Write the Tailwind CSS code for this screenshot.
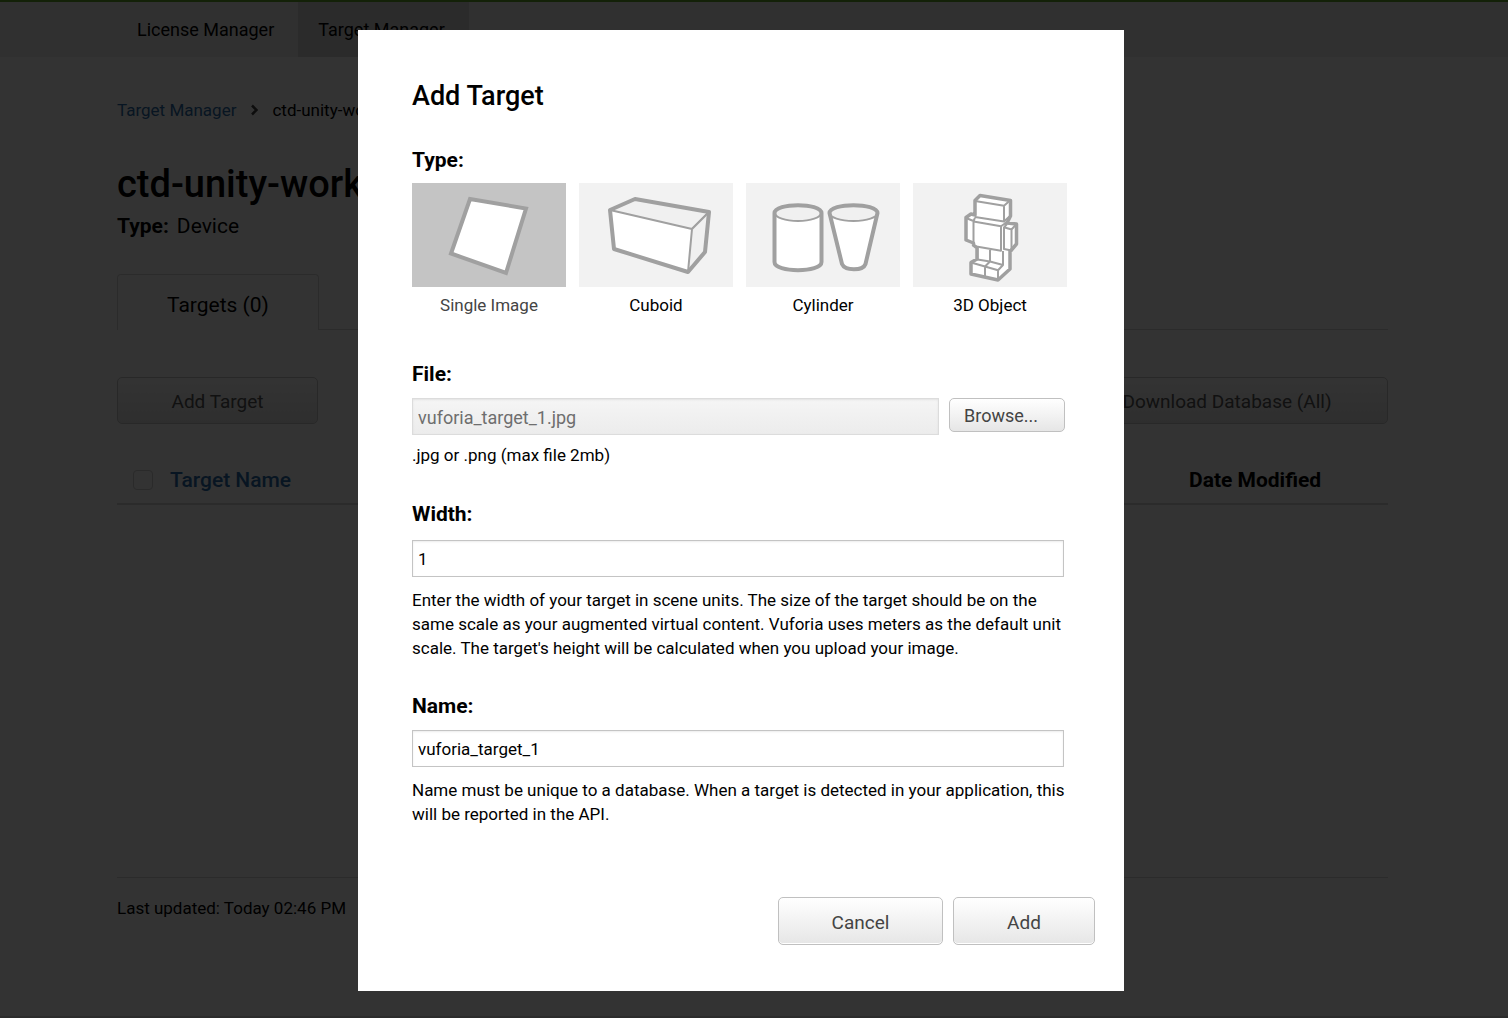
<!DOCTYPE html>
<html lang="en">
<head>
<meta charset="utf-8">
<meta name="viewport" content="width=device-width, initial-scale=1">
<title>Target Manager</title>
<script src="https://cdn.jsdelivr.net/npm/@tailwindcss/browser@4"></script>
</head>
<body class="relative min-h-screen overflow-x-hidden bg-white font-['Roboto',sans-serif] text-[17px] leading-6 text-black">

<!-- Page behind the dialog -->
<div class="flex min-h-screen flex-col border-t-2 border-[#5fa32a]">
  <nav class="h-[55px] bg-[#f0f0f0]">
    <div class="mx-auto flex h-full max-w-[1508px] pl-[117px] text-[18px]">
      <a href="#" class="flex items-center pt-px pr-6 pl-5">License Manager</a>
      <a href="#" class="flex items-center bg-[#d7d7d7] pt-px pr-6 pl-5">Target Manager</a>
    </div>
  </nav>

  <main class="mx-auto w-full max-w-[1508px] pr-[120px] pl-[117px]">
    <div class="mt-[41px] flex items-center gap-3.5">
      <a href="#" class="text-[#2a6ca8]">Target Manager</a>
      <svg class="h-3 w-2" viewBox="0 0 8 12" fill="none" stroke="#444" stroke-width="2.500"><path d="M2 1.500 6.500 6 2 10.500"/></svg>
      <span>ctd-unity-work</span>
    </div>
    <h1 class="mt-10 text-[38px] leading-[44px] font-medium">ctd-unity-work</h1>
    <p class="mt-2 flex gap-2 text-[21px]"><strong class="font-bold">Type:</strong> Device</p>

    <div class="mt-9 flex">
      <a href="#" class="flex h-14 w-[202px] items-center justify-center rounded-t border border-b-0 border-[#d7d7d7] pt-1 text-[21px]">Targets (0)</a>
      <div class="grow border-b border-[#d7d7d7]"></div>
    </div>

    <div class="mt-[47px] flex justify-between text-[19px] text-[#555]">
      <button type="button" class="h-[47px] w-[201px] rounded-[5px] border border-[#c8c8c8] bg-linear-to-b from-white to-[#e6e6e6] pt-0.5">Add Target</button>
      <button type="button" class="h-[47px] w-[322px] rounded-[5px] border border-[#c8c8c8] bg-linear-to-b from-white to-[#e6e6e6] pt-0.5">Download Database (All)</button>
    </div>

    <table class="mt-8 w-full text-left text-[21px]">
      <thead>
        <tr class="h-12 border-b-2 border-[#d7d7d7]">
          <th class="w-[53px] pl-4"><input type="checkbox" aria-label="Select all targets" class="block h-5 w-5 appearance-none rounded border border-[#d0d0d0]"></th>
          <th class="font-medium"><a href="#" class="text-[#2a6ca8]">Target Name</a></th>
          <th class="w-[199px] font-bold">Date Modified</th>
        </tr>
      </thead>
    </table>

    <div class="mt-[372px] border-t border-[#d7d7d7] pt-[18px]">Last updated: Today 02:46 PM</div>
  </main>
  <footer class="mt-auto h-0.5 bg-[#dcdcdc]"></footer>
</div>

<!-- Dialog -->
<div class="absolute inset-0 flex items-start justify-center bg-black/80 pt-[30px] pr-[26px]">
  <form role="dialog" aria-labelledby="dialog-title" class="w-full max-w-[766px] bg-white pt-[50px] pr-[29px] pb-[46px] pl-[54px]">
    <h2 id="dialog-title" class="text-[27px] leading-8 font-medium">Add Target</h2>

    <fieldset class="mt-9">
      <legend class="text-[21px] font-bold">Type:</legend>
      <div class="mt-[11px] mr-7 grid grid-cols-4 gap-[13px] text-center">
        <label class="text-[#444]">
          <input type="radio" name="type" class="sr-only" checked>
          <span class="block h-[104px] bg-[#c4c4c4]">
            <svg class="mx-auto block h-[104px] w-[154px]" viewBox="0 0 154 104"><path d="M58 16 114 25.500 94 90 39 70.500Z" fill="#fff" stroke="#a0a0a0" stroke-width="4"/></svg>
          </span>
          <span class="mt-1.5 block">Single Image</span>
        </label>
        <label>
          <input type="radio" name="type" class="sr-only">
          <span class="block h-[104px] bg-[#f2f2f2]">
            <svg class="mx-auto block h-[104px] w-[154px]" viewBox="0 0 154 104" stroke="#a0a0a0" stroke-linejoin="round">
              <path d="M31 27 56 16 130 29 126 69 109 89 35 66Z" fill="#fff" stroke="none"/>
              <path d="M31 27 56 16 130 29 113 46Z" fill="#f0f0f0" stroke-width="2"/>
              <path d="M113 46 130 29 126 69 109 89Z" fill="#f0f0f0" stroke-width="2"/>
              <path d="M31 27 56 16 130 29 126 69 109 89 35 66Z" fill="none" stroke-width="4"/>
            </svg>
          </span>
          <span class="mt-1.5 block">Cuboid</span>
        </label>
        <label>
          <input type="radio" name="type" class="sr-only">
          <span class="block h-[104px] bg-[#f2f2f2]">
            <svg class="mx-auto block h-[104px] w-[154px]" viewBox="0 0 154 104" fill="none" stroke="#a0a0a0">
              <path d="M29 31V79C29 89 75 89 75 79V31" fill="#fff" stroke="none"/>
              <path d="M84 31 95 79C98 87 116 87 119 79L131 31" fill="#fff" stroke="none"/>
              <ellipse cx="52" cy="30" rx="23" ry="8" fill="#f0f0f0" stroke-width="2"/>
              <ellipse cx="107.500" cy="30" rx="24" ry="8" fill="#f0f0f0" stroke-width="2"/>
              <path d="M28.500 30C29 19.500 75 19.500 75.500 30V79C75.500 90 28.500 90 28.500 79Z" stroke-width="4"/>
              <path d="M83.500 30C84 19.500 131 19.500 131.500 30L119.500 81C117 88 99 88 96 81Z" stroke-width="4" stroke-linejoin="round"/>
            </svg>
          </span>
          <span class="mt-1.5 block">Cylinder</span>
        </label>
        <label>
          <input type="radio" name="type" class="sr-only">
          <span class="block h-[104px] bg-[#f2f2f2]">
            <svg class="mx-auto block h-[104px] w-[154px]" viewBox="0 0 154 104" fill="none" stroke="#a0a0a0" stroke-linejoin="round">
              <path d="M62 17.500 67 12.500 97.500 17.500V33L94 40 103.500 41V61L98 67.500 97 68V86L85 97 58 91V79.500L64 76V65L60.500 62V60L53 57V34.500L58 31 62 32Z" fill="#fff" stroke-width="3.500"/>
              <path d="M62 18 91 22.700 97 17.500M91 22.700V38.500M62 34 91 38.500 97 33M62 34.500 60.500 38.500 88 43.300 94 39M60.500 38.500V63L88 67.700V43.300M53 35 60.500 38M91 44.300V66L98.500 67.500V46.500L91 44.300 94 41M98.500 46.500 103.500 41M64.500 65V76.500L77 78.500V67M77 78.500 90 82V68M58 79.500 72 83.500 77 78.500M72 83.500V94M72 83.500 85 87.300 90 82M85 87.300V97" stroke-width="2"/>
            </svg>
          </span>
          <span class="mt-1.5 block">3D Object</span>
        </label>
      </div>
    </fieldset>

    <div class="mt-[45px]">
      <label for="file" class="block text-[21px] font-bold">File:</label>
      <div class="mt-3 flex items-start gap-2.5">
        <input id="file" type="text" readonly value="vuforia_target_1.jpg" class="h-[37px] w-[527px] border border-[#dcdcdc] bg-linear-to-b from-[#f5f5f5] to-[#ececec] px-[5px] pt-0.5 text-[18px] text-[#6e6e6e] shadow-[inset_0_1px_2px_rgba(0,0,0,0.08)]">
        <button type="button" class="h-[34px] w-[116px] rounded-[5px] border border-[#c0c0c0] bg-linear-to-b from-white to-[#e6e6e6] pt-0.5 pl-3.5 text-left text-[18px] text-[#444]">Browse...</button>
      </div>
      <p class="mt-2">.jpg or .png (max file 2mb)</p>
    </div>

    <div class="mt-[35px]">
      <label for="width" class="block text-[21px] font-bold">Width:</label>
      <input id="width" type="text" value="1" class="mt-3.5 block h-[37px] w-[652px] border border-[#c4c4c4] bg-white px-[5px] shadow-[inset_0_1px_2px_rgba(0,0,0,0.08)]">
      <p class="mt-[11px] max-w-[668px]">Enter the width of your target in scene units. The size of the target should be on the same scale as your augmented virtual content. Vuforia uses meters as the default unit scale. The target's height will be calculated when you upload your image.</p>
    </div>

    <div class="mt-[34px]">
      <label for="name" class="block text-[21px] font-bold">Name:</label>
      <input id="name" type="text" value="vuforia_target_1" class="mt-3 block h-[37px] w-[652px] border border-[#c4c4c4] bg-white px-[5px] shadow-[inset_0_1px_2px_rgba(0,0,0,0.08)]">
      <p class="mt-[11px] max-w-[668px]">Name must be unique to a database. When a target is detected in your application, this will be reported in the API.</p>
    </div>

    <div class="mt-[71px] flex justify-end gap-2.5 text-[19px] text-[#444]">
      <button type="button" class="h-12 w-[165px] rounded-[5px] border border-[#c0c0c0] bg-linear-to-b from-white to-[#e6e6e6] pt-1 shadow-[inset_0_-1px_0_#fff]">Cancel</button>
      <button type="submit" class="h-12 w-[142px] rounded-[5px] border border-[#c0c0c0] bg-linear-to-b from-white to-[#e6e6e6] pt-1 shadow-[inset_0_-1px_0_#fff]">Add</button>
    </div>
  </form>
</div>
</body>
</html>
